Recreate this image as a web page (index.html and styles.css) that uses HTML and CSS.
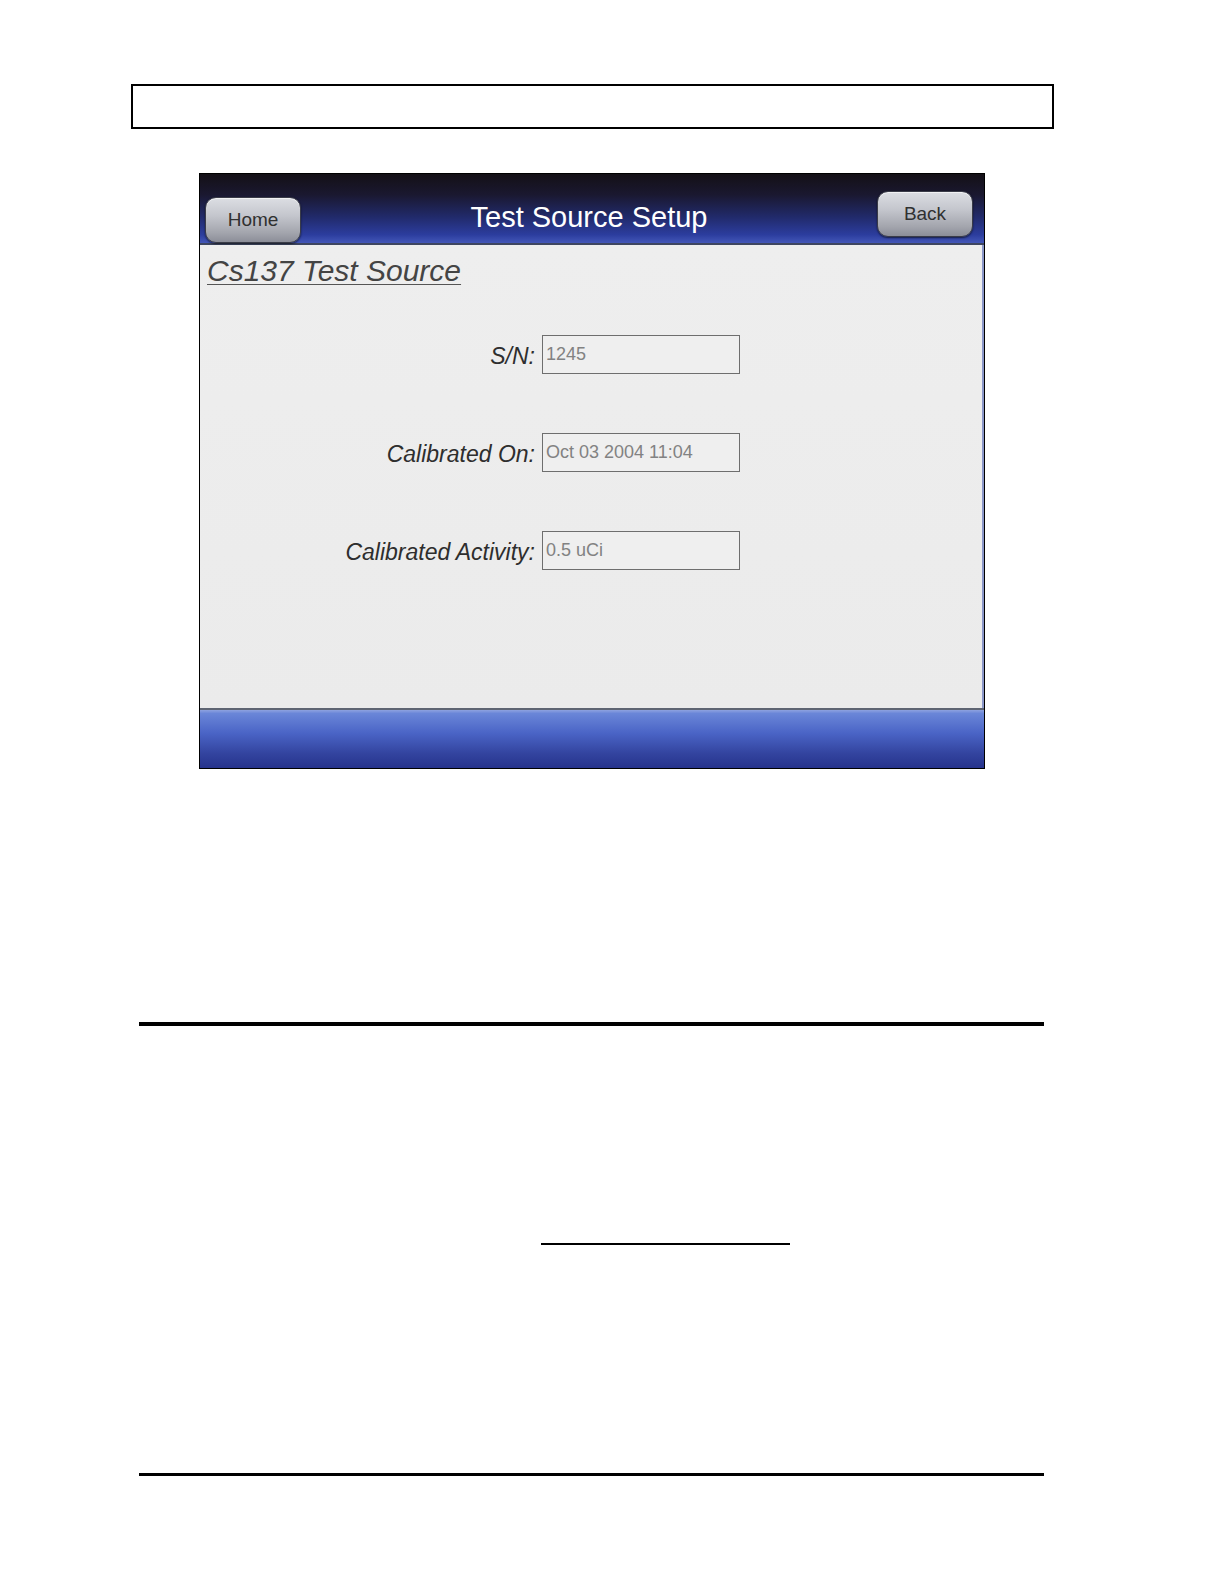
FILE: index.html
```html
<!DOCTYPE html>
<html>
<head>
<meta charset="utf-8">
<title>Test Source Setup</title>
<link rel="stylesheet" href="styles.css">
</head>
<body>
<div class="page">
  <div class="header-box"></div>
  <div class="screen">
    <div class="topbar">
      <button class="btn btn-home">Home</button>
      <h1 class="title">Test Source Setup</h1>
      <button class="btn btn-back">Back</button>
    </div>
    <div class="content">
      <h2 class="subtitle">Cs137 Test Source</h2>
      <div class="form">
        <div class="label">S/N:</div>
        <div class="field">1245</div>
        <div class="label">Calibrated On:</div>
        <div class="field">Oct 03 2004 11:04</div>
        <div class="label">Calibrated Activity:</div>
        <div class="field">0.5 uCi</div>
      </div>
    </div>
    <div class="footer"></div>
  </div>
  <div class="rule rule-thick"></div>
  <div class="rule rule-short"></div>
  <div class="rule rule-bottom"></div>
</div>
</body>
</html>
```
FILE: styles.css
```css
html, body {
  margin: 0;
  padding: 0;
  background: #ffffff;
}

.page {
  width: 1224px;
  min-height: 1584px;
  font-family: "Liberation Sans", Arial, sans-serif;
  padding-top: 84px;
  box-sizing: border-box;
}

.header-box {
  margin-left: 131px;
  width: 923px;
  height: 45px;
  border: 2px solid #000;
  box-sizing: border-box;
}

.screen {
  margin-top: 44px;
  margin-left: 199px;
  width: 786px;
  height: 596px;
  border: 1px solid #000;
  box-sizing: border-box;
  display: flex;
  flex-direction: column;
  background: #ececec;
}

.topbar {
  height: 71px;
  flex: none;
  display: flex;
  align-items: flex-start;
  background: linear-gradient(to bottom, #141016 0%, #1a1830 30%, #212a6a 62%, #2c3d9e 88%, #4357b8 100%);
  border-bottom: 2px solid #3e4660;
  box-sizing: border-box;
}

.btn {
  width: 96px;
  height: 46px;
  flex: none;
  border: 1px solid #3a3c48;
  border-radius: 11px;
  background: linear-gradient(to bottom, #dcdee3 0%, #c4c6cd 40%, #a2a4ac 80%, #8c8e98 100%);
  box-shadow: inset 0 1px 0 rgba(255,255,255,0.6), 0 1px 2px rgba(0,0,0,0.6);
  font-family: "Liberation Sans", Arial, sans-serif;
  font-size: 19px;
  color: #303030;
  padding: 0;
}

.btn-home {
  margin-top: 23px;
  margin-left: 5px;
}

.btn-back {
  margin-top: 17px;
  margin-right: 11px;
}

.title {
  flex: 1;
  margin: 26px 0 0;
  text-align: center;
  font-size: 29px;
  line-height: 34px;
  font-weight: normal;
  color: #ffffff;
}

.content {
  flex: 1;
  background: linear-gradient(to bottom, #eeeeee 0%, #ebebeb 100%);
  border-right: 2px solid #8a96c8;
  padding-top: 9px;
  padding-left: 7px;
}

.subtitle {
  margin: 0;
  font-size: 30px;
  line-height: 34px;
  font-style: italic;
  font-weight: normal;
  color: #444444;
  text-decoration: underline;
  text-decoration-color: #555;
  text-decoration-thickness: 1px;
  text-underline-offset: 3px;
}

.form {
  margin-top: 47px;
  margin-left: -7px;
  display: grid;
  grid-template-columns: 335px 198px;
  column-gap: 7px;
  row-gap: 59px;
  align-items: center;
}

.label {
  text-align: right;
  font-size: 23px;
  font-style: italic;
  color: #2e2e2e;
  padding-top: 4px;
}

.field {
  height: 39px;
  border: 1px solid #6e6e6e;
  box-sizing: border-box;
  background: #efefef;
  padding-left: 3px;
  font-size: 18px;
  line-height: 37px;
  color: #828282;
}

.footer {
  height: 60px;
  flex: none;
  border-top: 2px solid #5e6472;
  background: linear-gradient(to bottom, #8ea2e0 0%, #6a86d8 6%, #4a64c6 40%, #33449f 75%, #26338c 100%);
  box-sizing: border-box;
}

.rule {
  background: #000;
}

.rule-thick {
  margin-top: 253px;
  margin-left: 139px;
  width: 905px;
  height: 4px;
}

.rule-short {
  margin-top: 217px;
  margin-left: 541px;
  width: 249px;
  height: 2px;
}

.rule-bottom {
  margin-top: 228px;
  margin-left: 139px;
  width: 905px;
  height: 3px;
}
```
